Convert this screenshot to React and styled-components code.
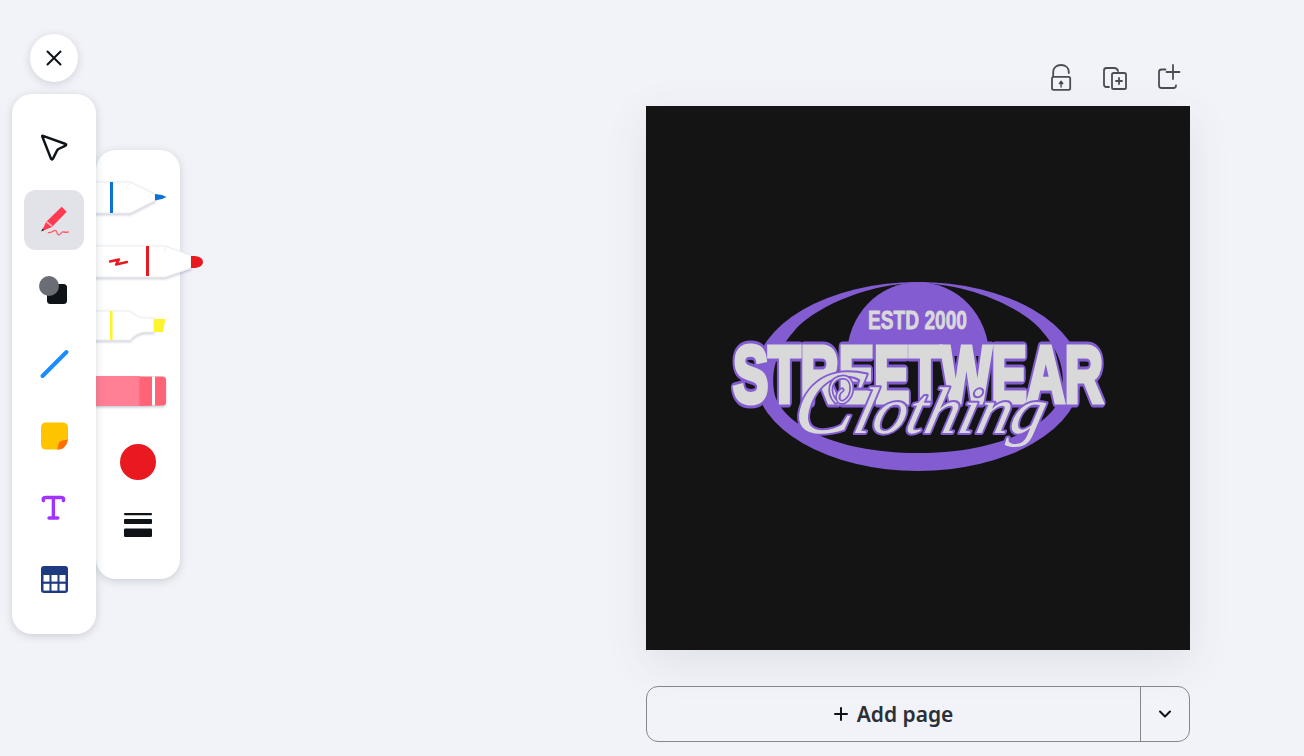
import styled, { createGlobalStyle } from "styled-components";

const GlobalStyle = createGlobalStyle`
    html, body {
        margin: 0;
        padding: 0;
        background: #f2f3f8;
    }
    * {
        box-sizing: border-box;
    }
`;

function CloseIcon() {
    return (
        <svg width="16" height="16" viewBox="0 0 16 16" fill="none" stroke="#0e1318" strokeWidth="2" strokeLinecap="round">
            <path d="M1.5 1.5L14.5 14.5M14.5 1.5L1.5 14.5" />
        </svg>
    );
}

// rail icons share a 32x32 box centred in a 60x60 tile
function CursorIcon() {
    return (
        <svg width="32" height="32" viewBox="0 0 32 32" fill="none" stroke="#0e1318" strokeWidth="2.4" strokeLinejoin="round">
            <path d="M4.2 4.2Q4 3.6 5 3.8L27.6 12Q28.8 12.8 27.6 13.6L20.5 17Q19.6 17.6 19 18.6L15 26.6Q14 28.2 13 26.8Z" />
        </svg>
    );
}

function PenIcon() {
    return (
        <svg width="32" height="32" viewBox="0 0 32 32" fill="none">
            <path d="M23.7 2.7L28.7 7.7L14 23L8 18Z" fill="#ff3b52" />
            <path d="M8 18L14 23L5.5 26.4L4.6 25.4Z" fill="#ff3b52" />
            <path d="M8.2 17.4L14.2 22.4" stroke="#ffb3bc" strokeWidth="1.4" />
            <path d="M4.8 24.6L6 26.2L3 27.4Z" fill="#0e1318" />
            <path
                d="M10.3 28.6C13 29 15 27 17 26.4C19 26 18.5 30 20.5 30.8C22.5 31.4 23 27.6 25 27.8C26.5 28 27.5 28.6 30.3 28"
                stroke="#ff5a6e"
                strokeWidth="1.3"
                strokeLinecap="round"
            />
        </svg>
    );
}

function ShapesIcon() {
    return (
        <svg width="32" height="32" viewBox="0 0 32 32">
            <rect x="9" y="8" width="20" height="20" rx="3.5" fill="#0e1318" />
            <circle cx="11" cy="10" r="10" fill="#6a6d73" />
        </svg>
    );
}

function LineIcon() {
    return (
        <svg width="32" height="32" viewBox="0 0 32 32" fill="none">
            <path d="M4.5 28L28.5 4" stroke="#1a8cff" strokeWidth="4" strokeLinecap="round" />
        </svg>
    );
}

function NoteIcon() {
    return (
        <svg width="32" height="32" viewBox="0 0 32 32">
            <path d="M8 2.5H24.5Q30 2.5 30 8V18L19 29.5H8Q3 29.5 3 24V8Q3 2.5 8 2.5Z" fill="#ffc400" />
            <path d="M30 18.5Q29 20 25 20.5Q21 21 20.5 24Q20 27 19 29.5Q24 29.5 26 27.5Q30 23.5 30 18.5Z" fill="#ff6d00" />
        </svg>
    );
}

function TextIcon() {
    return (
        <svg width="32" height="32" viewBox="0 0 32 32" fill="none" stroke="#a033ff" strokeWidth="3.4" strokeLinecap="round" strokeLinejoin="round">
            <path d="M5.4 8.5C4.9 6.5 5.4 5.5 7.4 5.5H23.4C25.4 5.5 25.9 6.5 25.4 8.5M15.4 5.5V26M11 26H19.8" />
        </svg>
    );
}

function TableIcon() {
    return (
        <svg width="32" height="32" viewBox="0 0 32 32">
            <rect x="3" y="2" width="27" height="27" rx="3" fill="#1e3a80" />
            <rect x="5.5" y="11" width="6" height="6.6" fill="#fff" />
            <rect x="13.5" y="11" width="6" height="6.6" fill="#fff" />
            <rect x="21.5" y="11" width="6" height="6.6" fill="#fff" />
            <rect x="5.5" y="19.8" width="6" height="6.8" fill="#fff" />
            <rect x="13.5" y="19.8" width="6" height="6.8" fill="#fff" />
            <rect x="21.5" y="19.8" width="6" height="6.8" fill="#fff" />
        </svg>
    );
}

// marker rows start 165px from the top of the page, one row is 64px
function MarkerDefs() {
    return (
        <svg width="0" height="0" style={{ position: "absolute" }}>
            <defs>
                <filter id="markerShadow" x="-10%" y="-20%" width="125%" height="150%">
                    <feDropShadow dx="0" dy="1.5" stdDeviation="1.2" floodColor="#39436b" floodOpacity="0.28" />
                </filter>
            </defs>
        </svg>
    );
}

function BlueMarker() {
    return (
        <MarkerSvg viewBox="0 0 110 64">
            <MarkerBody d="M-2 17H34L59 29V35.5L34 48H-2Z" filter="url(#markerShadow)" />
            <path d="M34 17L30 24" stroke="#f0f1f4" fill="none" />
            <path d="M59 29L66 30L70.5 32L66 34L59 35.5Z" fill="#0b72d6" />
            <rect x="14" y="17" width="3" height="31" fill="#0b72d6" />
        </MarkerSvg>
    );
}

function RedMarker() {
    return (
        <MarkerSvg viewBox="0 0 110 64">
            <MarkerBody d="M-2 17H69L95 26.5V39L69 48H-2Z" filter="url(#markerShadow)" />
            <path d="M69 17L69 24" stroke="#f0f1f4" fill="none" />
            <path d="M95 27H99Q107 28 107 33Q107 38 99 39H95Z" fill="#e8191f" />
            <rect x="50" y="17" width="3" height="30" fill="#e8191f" />
            <path d="M14 32.5L23 30.5L20 35.5L31 33" fill="none" stroke="#e8191f" strokeWidth="2.4" strokeLinejoin="round" strokeLinecap="round" />
        </MarkerSvg>
    );
}

function YellowMarker() {
    return (
        <MarkerSvg viewBox="0 0 110 64">
            <MarkerBody d="M-2 18H34Q40 24 48 25H58V39H48Q40 40 34 47H-2Z" filter="url(#markerShadow)" />
            <path d="M58 26H69.5L67 39H58Z" fill="#fff22e" />
            <rect x="14" y="18" width="2.6" height="29" fill="#fff22e" />
        </MarkerSvg>
    );
}

function Eraser() {
    return (
        <MarkerSvg viewBox="0 0 110 64">
            <path d="M-2 19H44V49H-2Z" fill="#ff7f94" filter="url(#markerShadow)" />
            <path d="M44 19.5H67Q70 20 70 23V45Q70 48.5 67 48.5L44 49Z" fill="#ff6376" filter="url(#markerShadow)" />
            <rect x="56" y="19.5" width="3" height="29" fill="#fff" />
        </MarkerSvg>
    );
}

function WeightIcon() {
    return (
        <svg width="28" height="24" viewBox="0 0 28 24" fill="#0e1318">
            <rect x="0" y="0" width="28" height="2.2" rx="1" />
            <rect x="0" y="6" width="28" height="5" rx="1" />
            <rect x="0" y="15.5" width="28" height="8.5" rx="1.2" />
        </svg>
    );
}

function LockIcon() {
    return (
        <svg width="32" height="32" viewBox="0 0 32 32" fill="none" stroke="#4a4d52" strokeWidth="1.8" strokeLinecap="round" strokeLinejoin="round">
            <path d="M7.2 14.5V10C7.2 5.5 10.5 3 15 3C19.5 3 22.8 5.5 22.8 10V11" />
            <rect x="6" y="14.8" width="18.2" height="13" rx="1.6" />
            <path d="M15.1 25V20.5M15.1 19.2L13.4 21.6H16.8Z" fill="#4a4d52" strokeWidth="1.4" />
        </svg>
    );
}

function DuplicateIcon() {
    return (
        <svg width="32" height="32" viewBox="0 0 32 32" fill="none" stroke="#4a4d52" strokeWidth="1.8" strokeLinecap="round" strokeLinejoin="round">
            <path d="M9 25H6.5C5 25 4 24 4 22.5V8.5C4 7 5 6 6.5 6H14C16 6 17.5 6.6 18 9" />
            <rect x="12" y="11" width="14" height="16" rx="1.6" />
            <path d="M19 16V22M16 19H22" />
        </svg>
    );
}

function AddPageIcon() {
    return (
        <svg width="32" height="32" viewBox="0 0 32 32" fill="none" stroke="#4a4d52" strokeWidth="1.8" strokeLinecap="round" strokeLinejoin="round">
            <path d="M11.5 7.5H7.5C6 7.5 5 8.5 5 10V23.5C5 25 6 26 7.5 26H19.5C21 26 22 25 22 23.5" />
            <path d="M19 3V17M12.5 10H25.5" />
        </svg>
    );
}

const CURL = "M190 296C181 286 184 272 197 271C208 271 209 290 198 296C190 298 190 288 196 284";

// the pictured design on the page: coordinates are the page's own 544 units
function StreetwearLogo() {
    return (
        <LogoSvg viewBox="0 0 544 544">
            <ellipse cx="272" cy="270.5" rx="163" ry="94.5" fill="#825cd0" />
            <path
                d="M272 177C215 178 165 205 149 224C130 245 125 265 128 285C132 315 185 347 272 347C359 347 412 315 416 285C419 265 414 245 395 224C379 205 329 178 272 177Z"
                fill="#141414"
            />
            <path d="M201 250A71 74 0 0 1 343 250Z" fill="#825cd0" />
            <WordmarkOutline x="87" y="295.5" textLength="370" lengthAdjust="spacingAndGlyphs">STREETWEAR</WordmarkOutline>
            <Wordmark x="87" y="295.5" textLength="370" lengthAdjust="spacingAndGlyphs">STREETWEAR</Wordmark>
            <Estd x="222" y="223" textLength="99" lengthAdjust="spacingAndGlyphs">ESTD 2000</Estd>
            <Script transform="translate(143 327) skewX(-14)" textLength="252" lengthAdjust="spacingAndGlyphs">
                <tspan fontSize="92">C</tspan>lothing
            </Script>
            <CurlOutline d={CURL} />
            <Curl d={CURL} />
        </LogoSvg>
    );
}

export default function App() {
    return (
        <>
            <GlobalStyle />
            <MarkerDefs />
            <Page>
                <Dock>
                    <ToolColumn>
                        <CloseButton>
                            <CloseIcon />
                        </CloseButton>
                        <Rail>
                            <RailTile><CursorIcon /></RailTile>
                            <RailTile $active><PenIcon /></RailTile>
                            <RailTile><ShapesIcon /></RailTile>
                            <RailTile><LineIcon /></RailTile>
                            <RailTile><NoteIcon /></RailTile>
                            <RailTile><TextIcon /></RailTile>
                            <RailTile><TableIcon /></RailTile>
                        </Rail>
                    </ToolColumn>
                    <PenPanel>
                        <MarkerStack>
                            <BlueMarker />
                            <RedMarker />
                            <YellowMarker />
                            <Eraser />
                        </MarkerStack>
                        <ColorRow>
                            <ColorDot />
                        </ColorRow>
                        <WeightRow>
                            <WeightIcon />
                        </WeightRow>
                    </PenPanel>
                </Dock>
                <Stage>
                    <PageActions>
                        <ActionButton><LockIcon /></ActionButton>
                        <ActionButton><DuplicateIcon /></ActionButton>
                        <ActionButton><AddPageIcon /></ActionButton>
                    </PageActions>
                    <Artboard>
                        <StreetwearLogo />
                    </Artboard>
                    <AddPageBar>
                        <AddPageButton>
                            <LineGlyph width="14" height="14" viewBox="0 0 14 14">
                                <path d="M7 1V13M1 7H13" />
                            </LineGlyph>
                            Add page
                        </AddPageButton>
                        <ChevronButton>
                            <LineGlyph width="14" height="9" viewBox="0 0 14 9">
                                <path d="M2 1.5L7 6.5L12 1.5" />
                            </LineGlyph>
                        </ChevronButton>
                    </AddPageBar>
                </Stage>
            </Page>
        </>
    );
}

// Styled Components

const Page = styled.div`
    display: flex;
    width: 1304px;
    height: 756px;
    overflow: hidden;
    background: #f2f3f8;
    font-family: "Noto Sans", "Liberation Sans", sans-serif;
`;

const Dock = styled.div`
    display: flex;
    align-items: flex-start;
    width: 646px;
    flex-shrink: 0;
    padding: 34px 0 0 12px;
`;

const ToolColumn = styled.div`
    display: flex;
    flex-direction: column;
    align-items: center;
    gap: 12px;
    width: 84px;
    position: relative;
    z-index: 2;
`;

const CloseButton = styled.button`
    display: flex;
    align-items: center;
    justify-content: center;
    width: 48px;
    height: 48px;
    padding: 0;
    border: none;
    border-radius: 50%;
    background: #fff;
    box-shadow: 0 2px 8px rgba(57, 76, 96, 0.2);
`;

const Rail = styled.div`
    display: flex;
    flex-direction: column;
    align-items: center;
    gap: 12px;
    width: 84px;
    padding: 24px 0;
    border-radius: 20px;
    background: #fff;
    box-shadow: 0 2px 8px rgba(57, 76, 96, 0.22);
`;

const RailTile = styled.div`
    display: flex;
    align-items: center;
    justify-content: center;
    width: 60px;
    height: 60px;
    border-radius: 12px;
    background: ${(props) => (props.$active ? "#e2e3e8" : "transparent")};
`;

const PenPanel = styled.div`
    display: flex;
    flex-direction: column;
    align-items: flex-start;
    width: 84px;
    margin-top: 116px;
    padding: 15px 0 23px;
    border-radius: 20px;
    background: #fff;
    box-shadow: 0 2px 8px rgba(57, 76, 96, 0.22);
`;

const MarkerStack = styled.div`
    display: flex;
    flex-direction: column;
`;

const MarkerSvg = styled.svg`
    display: block;
    flex-shrink: 0;
    width: 110px;
    height: 64px;
    overflow: hidden;
`;

const MarkerBody = styled.path`
    fill: #fff;
    stroke: #eceef2;
    stroke-width: 1.2;
`;

const ColorRow = styled.div`
    display: flex;
    align-items: center;
    justify-content: center;
    width: 84px;
    height: 64px;
    margin-top: 9px;
`;

const ColorDot = styled.div`
    width: 36px;
    height: 36px;
    border-radius: 50%;
    background: #e8191f;
`;

const WeightRow = styled.div`
    display: flex;
    align-items: center;
    justify-content: center;
    width: 84px;
    height: 62px;
`;

const Stage = styled.div`
    display: flex;
    flex-direction: column;
    width: 544px;
    padding-top: 62px;
`;

const PageActions = styled.div`
    display: flex;
    justify-content: flex-end;
    gap: 22px;
    height: 32px;
    margin-bottom: 12px;
    padding-right: 4px;
`;

const ActionButton = styled.div`
    width: 32px;
    height: 32px;
`;

const Artboard = styled.div`
    width: 544px;
    height: 544px;
    background: #141414;
    box-shadow: 0 12px 40px rgba(57, 76, 96, 0.1);
`;

const LogoSvg = styled.svg`
    display: block;
    width: 544px;
    height: 544px;
`;

const WordmarkOutline = styled.text`
    font-family: "Liberation Sans", sans-serif;
    font-weight: 700;
    font-size: 79px;
    fill: #825cd0;
    stroke: #825cd0;
    stroke-width: 11px;
    stroke-linejoin: round;
`;

const Wordmark = styled.text`
    font-family: "Liberation Sans", sans-serif;
    font-weight: 700;
    font-size: 79px;
    fill: #d9d9d9;
    stroke: #d9d9d9;
    stroke-width: 5px;
`;

const Estd = styled.text`
    font-family: "Liberation Sans", sans-serif;
    font-weight: 700;
    font-size: 25px;
    fill: #d9d9d9;
    stroke: #d9d9d9;
    stroke-width: 0.8px;
`;

const Script = styled.text`
    font-family: "Liberation Serif", serif;
    font-style: italic;
    font-size: 66px;
    fill: #d9d9d9;
    stroke: #825cd0;
    stroke-width: 4px;
    paint-order: stroke;
    stroke-linejoin: round;
`;

const CurlOutline = styled.path`
    fill: none;
    stroke: #825cd0;
    stroke-width: 5;
    stroke-linecap: round;
`;

const Curl = styled.path`
    fill: none;
    stroke: #d9d9d9;
    stroke-width: 1.6;
    stroke-linecap: round;
`;

const AddPageBar = styled.div`
    display: flex;
    height: 56px;
    margin-top: 36px;
    border: 1px solid #85878a;
    border-radius: 12px;
`;

const AddPageButton = styled.div`
    display: flex;
    flex: 1;
    align-items: center;
    justify-content: center;
    gap: 9px;
    border-right: 1px solid #85878a;
    color: #2b2f36;
    font-size: 21px;
    font-weight: 600;
`;

const ChevronButton = styled.div`
    display: flex;
    align-items: center;
    justify-content: center;
    width: 48px;
`;

const LineGlyph = styled.svg`
    fill: none;
    stroke: #0e1318;
    stroke-width: 2;
    stroke-linecap: round;
    stroke-linejoin: round;
`;
